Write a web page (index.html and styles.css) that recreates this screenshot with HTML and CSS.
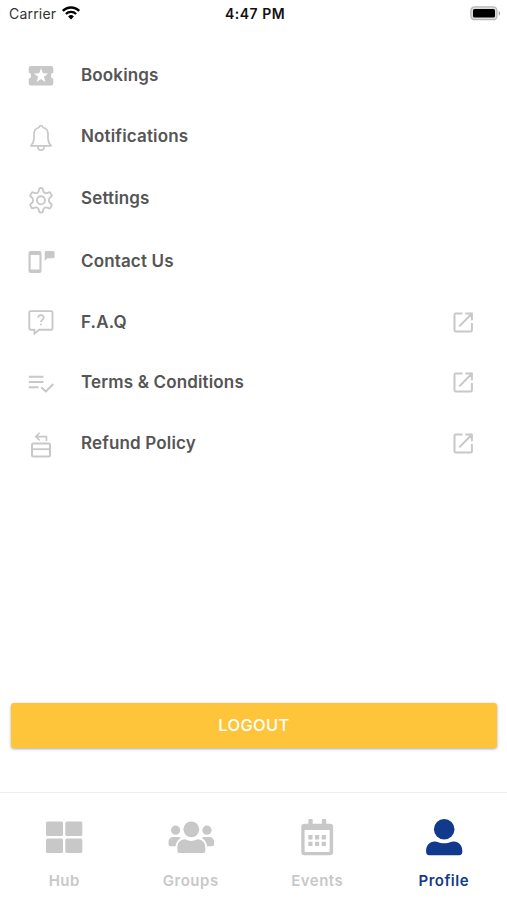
FILE: index.html
```html
<!DOCTYPE html>
<html lang="en">
<head>
	<meta charset="UTF-8">
	<title>Profile</title>
	<link rel="stylesheet" href="styles.css">
</head>
<body>
	<div id="status">
		<div class="carrier">
			<span>Carrier</span>
			<svg width="20" height="16" viewBox="0 0 20 16" fill="none" stroke="#000">
				<path d="M1.8 5.9a11.4 11.4 0 0 1 16.4 0" stroke-width="2.5"/>
				<path d="M4.9 9a7.2 7.2 0 0 1 10.2 0" stroke-width="2.3"/>
				<path d="M10 14.5l-2.9-3a4.2 4.2 0 0 1 5.8 0z" fill="#000" stroke="none"/>
			</svg>
		</div>
		<div class="time">4:47 PM</div>
		<svg class="battery" width="31" height="15" viewBox="0 0 31 15">
			<rect x=".9" y=".9" width="26" height="12.8" rx="3.5" fill="#ddd" stroke="#b8b8b8" stroke-width="1.3"/>
			<rect x="3" y="3" width="22" height="8.6" rx="1.6"/>
			<path d="M28.7 5v4.6c2-.8 2-3.800 0-4.600z" fill="#aaa"/>
		</svg>
	</div>

	<ul id="menu">
		<li>
			<svg class="icon" viewBox="0 0 30 31">
				<path fill="#c8c8c8" fill-rule="evenodd" d="M4.700 6h20.600a2 2 0 0 1 2 2v4.600a3.200 3.200 0 0 0 0 6.200v4.600a2 2 0 0 1-2 2H4.700a2 2 0 0 1-2-2v-4.600a3.200 3.200 0 0 0 0-6.200V8a2 2 0 0 1 2-2zM15 8.300l-1.800 5-5.300.2 4.200 3.300-1.500 5.100 4.400-3 4.400 3-1.500-5.100 4.200-3.300-5.300-.2z"/>
			</svg>
			<span>Bookings</span>
		</li>
		<li>
			<svg class="icon line" viewBox="0 0 30 31">
				<path d="M4.900 24.800c2-2.200 3.100-4 3.100-7.600v-3.700c0-3.700 1.800-6.300 5-7 .3-2.500 3.700-2.500 4 0 3.200.7 5 3.300 5 7v3.700c0 3.600 1.100 5.400 3.100 7.600z"/>
				<path d="M11.800 25.200c0 5.300 6.400 5.300 6.400 0"/>
			</svg>
			<span>Notifications</span>
		</li>
		<li class="tall">
			<svg class="icon line" viewBox="0 0 30 31">
				<g transform="translate(2 4.300) scale(1.083)">
					<circle cx="12" cy="12" r="3.700"/>
					<path d="M9.900 3.400l.5-2.100q.1-.6.800-.6h1.600q.7 0 .8.6l.5 2.100q.3 1.100 1.400 1.700 1 .5 2.100.2l1.900-.7q.7-.2 1 .3l1.400 2.400q.3.600-.2 1l-1.600 1.400q-.8.900-.8 2.300t.8 2.300l1.600 1.400q.5.400.2 1l-1.400 2.400q-.3.500-1 .3l-1.900-.7q-1.100-.3-2.100.2-1.100.6-1.400 1.700l-.5 2.100q-.1.600-.8.600h-1.600q-.7 0-.8-.6l-.5-2.100q-.3-1.100-1.400-1.700-1-.5-2.100-.2l-1.900.7q-.7.200-1-.3L2.100 16.700q-.3-.6.200-1l1.600-1.400q.8-.9.800-2.300t-.8-2.300L2.300 8.300q-.5-.4-.2-1l1.400-2.400q.3-.5 1-.3l1.900.7q1.100.3 2.100-.2 1.100-.6 1.400-1.700z"/>
				</g>
			</svg>
			<span>Settings</span>
		</li>
		<li class="tall">
			<svg class="icon" viewBox="0 0 30 31">
				<path fill="#c8c8c8" fill-rule="evenodd" d="M4.500 5h9a2 2 0 0 1 2 2v18a2 2 0 0 1-2 2h-9a2 2 0 0 1-2-2V7a2 2 0 0 1 2-2zM4.700 9v14.400h8.700V9z"/>
				<path fill="#c8c8c8" d="M20 5h7.300a1.300 1.300 0 0 1 1.300 1.300v4.600a1.300 1.300 0 0 1-1.300 1.300h-6l-2.600 2.900V6.300A1.300 1.300 0 0 1 20 5z"/>
			</svg>
			<span>Contact Us</span>
		</li>
		<li class="short">
			<svg class="icon line" viewBox="0 0 30 31">
				<path stroke-width="1.900" d="M4.600 4.100h20.600a1.300 1.300 0 0 1 1.300 1.300v16a1.300 1.300 0 0 1-1.300 1.300H13l-4.600 4.200v-4.200H4.600a1.300 1.300 0 0 1-1.300-1.300v-16a1.300 1.300 0 0 1 1.300-1.300z"/>
				<path stroke-width="1.700" d="M12.200 10.800c.1-3.700 5.700-3.500 5.600 0-.1 2-2.800 2-2.800 4.200"/>
				<circle cx="15" cy="17.500" r="1" fill="#c8c8c8" stroke="none"/>
			</svg>
			<span>F.A.Q</span>
			<svg class="open" viewBox="0 0 21 21"><path d="M9.500 1.600H2.700a1.200 1.200 0 0 0-1.200 1.200v15.400a1.200 1.200 0 0 0 1.200 1.200h15a1.200 1.200 0 0 0 1.200-1.200V11M6.300 14.400L18.200 2.300M12.300 1.600h6.600v6.700"/></svg>
		</li>
		<li>
			<svg class="icon line terms" viewBox="0 0 30 31">
				<path d="M2.800 9.800h14.700M2.800 15h14.700M2.800 20.300h9.700M15.300 20.200l4.500 4.300 7.400-7.500"/>
			</svg>
			<span>Terms &amp; Conditions</span>
			<svg class="open" viewBox="0 0 21 21"><path d="M9.500 1.600H2.700a1.200 1.200 0 0 0-1.200 1.200v15.400a1.200 1.200 0 0 0 1.200 1.200h15a1.200 1.200 0 0 0 1.200-1.200V11M6.300 14.400L18.200 2.300M12.300 1.600h6.600v6.700"/></svg>
		</li>
		<li>
			<svg class="icon line" viewBox="0 0 30 31">
				<rect x="6" y="15.500" width="18" height="13" rx="1.500" stroke-width="2"/>
				<path stroke-width="1.800" d="M6 21.200h18"/>
				<path stroke-width="1.600" d="M20.500 13V8.600H10M13.700 4.700L9.800 8.600l3.900 3.900"/>
			</svg>
			<span>Refund Policy</span>
			<svg class="open" viewBox="0 0 21 21"><path d="M9.500 1.600H2.700a1.200 1.200 0 0 0-1.200 1.200v15.400a1.200 1.200 0 0 0 1.200 1.200h15a1.200 1.200 0 0 0 1.200-1.200V11M6.300 14.400L18.200 2.300M12.300 1.600h6.600v6.700"/></svg>
		</li>
	</ul>

	<button id="logout">LOGOUT</button>

	<div id="tabs">
		<div class="tab">
			<svg viewBox="0 0 48 40">
				<rect x="6" y="4.500" width="17" height="14.500" rx="1.500"/>
				<rect x="25.300" y="4.500" width="17" height="14.500" rx="1.500"/>
				<rect x="6" y="21.500" width="17" height="14.500" rx="1.500"/>
				<rect x="25.300" y="21.500" width="17" height="14.500" rx="1.500"/>
			</svg>
			<span>Hub</span>
		</div>
		<div class="tab">
			<svg viewBox="0 0 48 40">
				<circle cx="24.300" cy="12.300" r="7.900"/>
				<circle cx="8.600" cy="13.200" r="4.600"/>
				<circle cx="40" cy="13.200" r="4.600"/>
				<path d="M18.300 22.300c3.800 2.200 8.200 2.200 12 0 4.600 0 8 3.200 8 8v3.200a2.600 2.600 0 0 1-2.600 2.600H13a2.600 2.600 0 0 1-2.600-2.600v-3.200c0-4.800 3.300-8 7.900-8z"/>
				<path d="M6.600 20h4.600q1.600 0 2.600 1-4.400 2.400-5.200 8.200H3.500a2 2 0 0 1-2-2v-2.500A4.800 4.800 0 0 1 6.600 20zM42 20h-4.600q-1.600 0-2.600 1 4.400 2.400 5.200 8.200h5.100a2 2 0 0 0 2-2v-2.500A4.800 4.800 0 0 0 42 20z"/>
			</svg>
			<span>Groups</span>
		</div>
		<div class="tab">
			<svg viewBox="0 0 48 40">
				<path fill-rule="evenodd" d="M11.500 6.800h3.900V3a1 1 0 0 1 1-1h2.300a1 1 0 0 1 1 1v3.800h9.200V3a1 1 0 0 1 1-1h2.300a1 1 0 0 1 1 1v3.800h3.700a3.200 3.200 0 0 1 3.200 3.200v25a3.200 3.200 0 0 1-3.200 3.200H11.500A3.200 3.200 0 0 1 8.300 35V10a3.200 3.200 0 0 1 3.200-3.200zM11.600 13v21.200q0 .8.800.8h23.500q.8 0 .8-.8V13z"/>
				<path d="M15.300 18h4.200v4.400h-4.200zM22 18h4.200v4.400H22zM28.700 18h4.200v4.400h-4.200zM15.300 24.700h4.200v4.400h-4.200zM22 24.700h4.200v4.400H22zM28.700 24.700h4.200v4.400h-4.200z"/>
			</svg>
			<span>Events</span>
		</div>
		<div class="tab selected">
			<svg viewBox="0 0 48 40">
				<circle cx="24.200" cy="12.200" r="10.300"/>
				<path d="M14.600 24.600c2.400 0 4.600 1.700 9.600 1.700s7.200-1.700 9.600-1.700c5 0 8.500 4 8.500 9v1.500a3.100 3.100 0 0 1-3.100 3.100h-30a3.100 3.100 0 0 1-3.100-3.100v-1.500c0-5 3.500-9 8.500-9z"/>
			</svg>
			<span>Profile</span>
		</div>
	</div>
</body>
</html>
```

FILE: styles.css
```css
*{padding: 0;margin: 0;box-sizing: border-box;}
body{width: 507px;height: 900px;background: #fff;font-family: Inter, "Liberation Sans", sans-serif;display: flex;flex-direction: column;overflow: hidden;}
svg{display: block;flex: none;}

#status{height: 45px;padding: 0 6px 0 9px;display: grid;grid-template-columns: 1fr auto 1fr;align-items: start;color: #111;}
#status .carrier{display: flex;height: 27px;align-items: center;font-size: 14px;letter-spacing: .2px;color: #333;}
#status .carrier svg{margin: -1px 0 0 5px;}
#status .time{font-size: 14px;font-weight: 600;line-height: 28px;letter-spacing: .5px;}
#status .battery{justify-self: end;margin-top: 6px;}

#menu{list-style: none;}
#menu li{display: flex;align-items: center;height: 61px;padding: 0 33px 0 26px;font-size: 17px;font-weight: 600;letter-spacing: .15px;color: #555;}
#menu li.tall{height: 63px;}
#menu li.short{height: 59px;}
#menu li span{padding-bottom: 2px;}
#menu .icon{width: 30px;height: 31px;margin-right: 25px;}
#menu .open{width: 21px;height: 21px;margin-left: auto;}
.line, .open{fill: none;stroke: #c8c8c8;stroke-width: 1.7;stroke-linejoin: round;}
.open, .terms{stroke-width: 2;}

#logout{height: 45px;margin: auto 10px 44px 11px;padding-bottom: 2px;border: 0;border-radius: 3px;background: #ffc53a;color: #fff;font: 500 16.5px Inter, sans-serif;letter-spacing: .3px;box-shadow: 0 1px 3px rgba(0,0,0,.35);}

#tabs{display: flex;height: 108px;border-top: 1px solid #eee;padding: 24px 0 0 1px;}
.tab{flex: 1;display: flex;flex-direction: column;align-items: center;color: #c8c8c8;font-size: 15px;font-weight: 600;letter-spacing: .5px;}
.tab svg{width: 48px;height: 40px;fill: #c8c8c8;}
.tab span{line-height: 20px;margin-top: 14px;}
.selected{color: #123a8c;}
.selected svg{fill: #123a8c;}
```
